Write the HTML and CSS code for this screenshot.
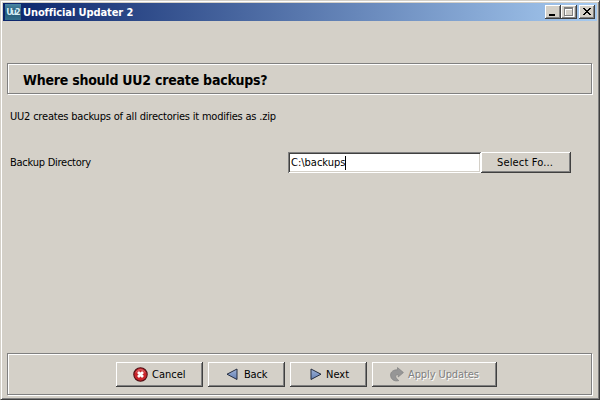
FILE: index.html
```html
<!DOCTYPE html>
<html lang="en">
<head>
<meta charset="utf-8">
<title>Unofficial Updater 2</title>
<link rel="stylesheet" href="styles.css">
</head>
<body>
<div class="window">
  <header class="titlebar">
    <span class="app-icon"><span class="app-icon-text">Uu2</span></span>
    <span class="title">Unofficial Updater 2</span>
    <span class="controls">
      <span class="control"><svg width="16" height="14" shape-rendering="crispEdges"><path d="M4 9h6v2h-6z"/></svg></span>
      <span class="control"><svg width="16" height="14" shape-rendering="crispEdges"><path fill="#fff" d="M4 3h9v9h-9z"/><path fill="#808080" d="M3 2h9v9h-9z"/><path fill="#fff" d="M4 4h7v6h-7z"/><path fill="#d4d0c8" d="M5 5h6v5h-6z"/></svg></span>
      <span class="control close"><svg width="16" height="14" shape-rendering="crispEdges"><path d="M4 3h2v1h1v1h2v-1h1v-1h2v1h-1v1h-1v1h-1v1h1v1h1v1h1v1h-2v-1h-1v-1h-2v1h-1v1h-2v-1h1v-1h1v-1h1v-1h-1v-1h-1v-1h-1z"/></svg></span>
    </span>
  </header>
  <section class="heading etched"><h1>Where should UU2 create backups?</h1></section>
  <p class="note">UU2 creates backups of all directories it modifies as .zip</p>
  <div class="field">
    <span class="label">Backup Directory</span>
    <div class="input"><span class="value">C:\backups</span><span class="caret"></span></div>
    <div class="button browse"><span class="t-select">Select Fo...</span></div>
  </div>
  <footer class="actions etched">
    <div class="button cancel">
      <svg class="icon" width="15" height="15" viewBox="0 0 15 15"><circle cx="7.5" cy="7.5" r="6.7" fill="#c9252b" stroke="#501015" stroke-width="1.1"/><path d="M3 5.5a5 5 0 0 1 9 0" fill="none" stroke="#df7575"/><path d="M5 5l5 5M10 5l-5 5" stroke="#fff" stroke-width="2.7"/></svg>
      <span class="t-cancel">Cancel</span>
    </div>
    <div class="button back">
      <svg class="icon" width="12" height="13" viewBox="0 0 12 13"><defs><linearGradient id="blue" x2="0" y2="1"><stop stop-color="#9eb2d6"/><stop offset="1" stop-color="#6480b4"/></linearGradient></defs><path d="M11 1v10.5L1 6.2z" fill="url(#blue)" stroke="#252d40" stroke-linejoin="round"/></svg>
      <span class="t-back">Back</span>
    </div>
    <div class="button next">
      <svg class="icon" width="12" height="13" viewBox="0 0 12 13"><path d="M1 1v10.5L11 6.2z" fill="url(#blue)" stroke="#252d40" stroke-linejoin="round"/></svg>
      <span class="t-next">Next</span>
    </div>
    <div class="button apply">
      <svg class="icon" width="14" height="15" viewBox="0 0 14 15"><path d="M7.5.6 13.4 5.5 8.2 10V7.5C5.2 7.3 4.5 10.5 8.8 13.6 3.4 15 .6 11.5.6 8 .7 4.8 3.2 2.8 7.5 2.8z" fill="#969696" stroke="#858585" stroke-width=".8"/></svg>
      <span class="t-apply">Apply Updates</span>
    </div>
  </footer>
</div>
</body>
</html>
```

FILE: styles.css
```css
* { box-sizing: border-box; }
body {
  margin: 0;
  background: #d4d0c8;
  color: #000;
  font: 11px/13px "DejaVu Sans Condensed", "DejaVu Sans", sans-serif;
  font-stretch: condensed;
  white-space: nowrap;
}
.window {
  display: flex;
  flex-direction: column;
  width: 600px;
  height: 400px;
  padding: 1px;
  border: 1px solid;
  border-color: #d4d0c8 #404040 #404040 #d4d0c8;
  box-shadow: inset 1px 1px #fff, inset -1px -1px #808080;
  overflow: hidden;
}
.titlebar {
  display: flex;
  align-items: center;
  height: 18px;
  margin: 1px 1px 0;
  padding: 0 2px;
  background: linear-gradient(90deg, #0a246a, #a6caf0);
  color: #fff;
  font-weight: bold;
}
.app-icon {
  display: flex;
  align-items: center;
  justify-content: center;
  width: 16px;
  height: 16px;
  margin-right: 2px;
  background: linear-gradient(#4a87a5, #245773 55%, #326f8d);
  color: #d5edf5;
}
.app-icon-text { font-size: 9px; letter-spacing: -1.9px; margin-left: -1px; }
.title { letter-spacing: -0.1px; }
.controls { display: flex; margin-left: auto; }
.control {
  width: 16px;
  height: 14px;
  background: #d4d0c8;
  box-shadow: inset -1px -1px #404040, inset 1px 1px #fff, inset -2px -2px #808080;
}
.control svg { display: block; }
.close { margin-left: 2px; }
.etched {
  width: 585px;
  margin-left: 5px;
  border: 1px solid #808080;
  box-shadow: 1px 1px #fff, inset 1px 1px #fff;
}
.heading { height: 31px; margin-top: 42px; padding: 8px 15px; }
h1 { margin: 0; font-size: 14px; line-height: 16px; font-weight: bold; letter-spacing: -0.23px; }
.note { margin: 16px 0 0 8px; letter-spacing: -0.2px; }
.field { display: flex; align-items: center; margin: 29px 0 0 8px; }
.label { width: 278px; letter-spacing: -0.25px; }
.input {
  display: flex;
  align-items: center;
  width: 193px;
  height: 21px;
  padding-left: 3px;
  background: #fff;
  box-shadow: inset 1px 1px #808080, inset -1px -1px #fff, inset 2px 2px #404040, inset -2px -2px #d4d0c8;
}
.caret { width: 1px; height: 14px; background: #000; }
.button {
  display: flex;
  align-items: center;
  height: 25px;
  box-shadow: inset -1px -1px #404040, inset 1px 1px #fff, inset -2px -2px #808080;
}
.browse { width: 90px; height: 21px; padding-left: 16px; letter-spacing: 0.15px; }
.actions {
  display: flex;
  height: 42px;
  margin-top: auto;
  margin-bottom: 3px;
  padding: 8px 0 0 108px;
}
.icon { flex: none; }
.cancel { width: 87px; margin-right: 5px; padding-left: 17px; gap: 4px; }
.back { width: 77px; margin-right: 5px; padding-left: 18px; gap: 6px; letter-spacing: -0.2px; }
.next { width: 77px; margin-right: 5px; padding-left: 20px; gap: 4px; }
.apply { width: 125px; padding-left: 18px; gap: 4px; color: #808080; text-shadow: 1px 1px #fff; letter-spacing: -0.1px; }
```
